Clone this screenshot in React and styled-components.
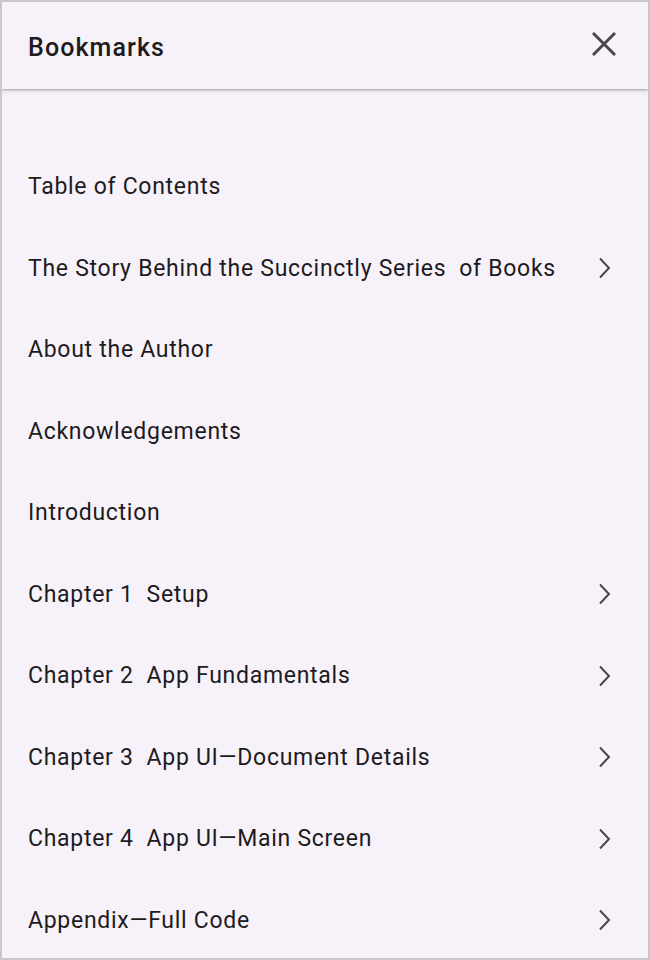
import styled, { createGlobalStyle } from 'styled-components';

const GlobalStyle = createGlobalStyle`
    html, body {
        margin: 0;
        padding: 0;
        background: #f7f2fa;
    }
    * {
        box-sizing: border-box;
    }
`;

const Frame = styled.div`
    width: 650px;
    height: 960px;
    border: 2px solid #c9c7cc;
    background: #f7f2fa;
    font-family: Roboto, 'Noto Sans', sans-serif;
    color: #1d1b20;
    overflow: hidden;
    display: flex;
    flex-direction: column;
`;

const Header = styled.header`
    height: 87px;
    flex-shrink: 0;
    display: flex;
    align-items: center;
    justify-content: space-between;
    padding: 0 30px 0 26px;
    background: #f7f2fa;
    box-shadow: 0 1px 2px rgba(0, 0, 0, 0.25), 0 2px 5px rgba(0, 0, 0, 0.12);
    position: relative;
    z-index: 1;
`;

const Title = styled.h1`
    margin: 0;
    font-size: 25px;
    font-weight: 500;
    letter-spacing: 1.1px;
    margin-top: 4px;
`;

const CloseButton = styled.button`
    border: none;
    background: none;
    padding: 0;
    width: 28px;
    height: 28px;
    display: flex;
    align-items: center;
    justify-content: center;
    color: #49454f;
    margin-top: -4px;
    cursor: pointer;
`;

const List = styled.ul`
    list-style: none;
    margin: 0;
    padding: 57px 0 0;
`;

const Row = styled.li`
    height: 81.5px;
    display: flex;
    align-items: center;
    justify-content: space-between;
    padding: 0 35px 0 26px;
    font-size: 23px;
    letter-spacing: 0.72px;
    white-space: pre;
`;

const Chevron = styled.svg`
    width: 16px;
    height: 22px;
    color: #49454f;
    flex-shrink: 0;
`;

const bookmarks = [
    { title: 'Table of Contents' },
    { title: 'The Story Behind the Succinctly Series  of Books', children: true },
    { title: 'About the Author' },
    { title: 'Acknowledgements' },
    { title: 'Introduction' },
    { title: 'Chapter 1  Setup', children: true },
    { title: 'Chapter 2  App Fundamentals', children: true },
    { title: 'Chapter 3  App UI\u2014Document Details', children: true },
    { title: 'Chapter 4  App UI\u2014Main Screen', children: true },
    { title: 'Appendix\u2014Full Code', children: true },
];

function App() {
    return (
        <>
            <GlobalStyle />
            <Frame>
                <Header>
                    <Title>Bookmarks</Title>
                    <CloseButton aria-label='Close'>
                        <svg width='28' height='28' viewBox='0 0 28 28'>
                            <path
                                d='M3 3 L25 25 M25 3 L3 25'
                                stroke='currentColor'
                                strokeWidth='3'
                                fill='none'
                            />
                        </svg>
                    </CloseButton>
                </Header>
                <List>
                    {bookmarks.map((b) => (
                        <Row key={b.title}>
                            <span>{b.title}</span>
                            {b.children && (
                                <Chevron viewBox='0 0 16 22'>
                                    <path
                                        d='M3 1.5 L12 11 L3 20.5'
                                        stroke='currentColor'
                                        strokeWidth='2'
                                        fill='none'
                                    />
                                </Chevron>
                            )}
                        </Row>
                    ))}
                </List>
            </Frame>
        </>
    );
}

export default App;
